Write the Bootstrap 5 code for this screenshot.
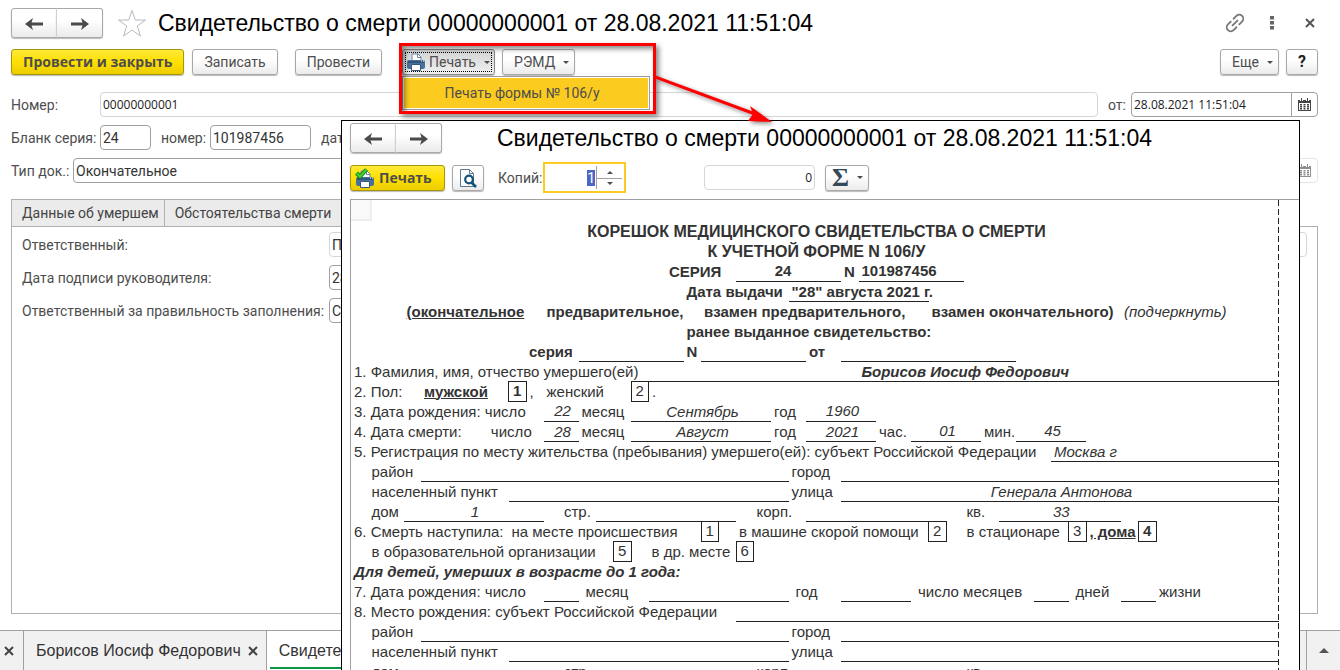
<!DOCTYPE html>
<html lang="ru">
<head>
<meta charset="utf-8">
<meta name="viewport" content="width=device-width, initial-scale=1">
<title>Свидетельство о смерти</title>
<link href="https://cdn.jsdelivr.net/npm/bootstrap@5.3.0/dist/css/bootstrap.min.css" rel="stylesheet">
<style>
  body { font: 14px/20px Roboto, sans-serif; color: #4d4d4d; background: #fff; }
  .doc-title { font: 23px/30px "Liberation Sans", sans-serif; color: #000; white-space: nowrap; margin: 0; }
  .btn { --bs-btn-font-size: 14px; --bs-btn-line-height: 20px; --bs-btn-padding-x: 11px; --bs-btn-padding-y: 0px;
    --bs-btn-border-radius: 3px; --bs-btn-color: #4d4d4d; --bs-btn-border-color: #a8a8a8;
    height: 26px; white-space: nowrap; font-family: Roboto, sans-serif;
    background: linear-gradient(#fff 40%, #ebebeb); box-shadow: 0 1px 1px #bbb; }
  .btn-main { font: bold 14px/20px "Open Sans", sans-serif; background: linear-gradient(#ffe93a, #ffe000 50%, #ebcd00); --bs-btn-border-color: #a8960a; }
  .btn-nav { width: 46px; height: 30px; }
  .btn-nav + .btn-nav { width: 47px; border-left-color: #d0d0d0; }
  .btn-bare { border: 0; background: none; padding: 0; color: #555; line-height: 0; }
  .btn-pressed { width: 93px; background: linear-gradient(#d4d4d4, #f0f0f0); outline: 1px dotted #000; outline-offset: -4px; border-color: #888; }
  .caret { width: 0; height: 0; border: 3px solid transparent; border-top-color: #4d4d4d; border-bottom: 0; }
  .caret-up { border: 3px solid transparent; border-bottom-color: #4d4d4d; border-top: 0; }
  .form-control { height: 25px; min-height: 0; padding: 0 2px; border: 1px solid #a0a0a0; border-radius: 4px; font: 14px/20px Roboto, sans-serif; color: #333; }
  .form-control.digits { font: 12px/20px "Open Sans", sans-serif; color: #222; }
  .form-control.pale { border-color: #d6d6d6; }
  .input-group .btn { height: 25px; width: 27px; padding: 0; line-height: 0; background: #fff; box-shadow: none; border-color: #a0a0a0; border-radius: 4px; }
  .input-group.pale .btn { border-color: #d6d6d6; opacity: .6; }
  label { white-space: nowrap; }
  .w-ser { width: 51px; } .w-num { width: 101px; } .w-date { width: 187px; } .w-sum { width: 111px; }

  /* main form */
  .page { height: 100vh; overflow: hidden; }
  .form-area { padding: 8px 22px 16px 11px; min-height: 0; }
  .title-row { height: 30px; }
  .star-btn { margin: 0 11px 0 14px; }
  .window-tools { gap: 25px; margin-right: 3px; }
  .close-btn { margin-left: 6px; }
  .command-row { margin-top: 11px; margin-bottom: 17px; }
  .save-btn { margin-left: 8px; } .post-btn { margin: 0 20px 0 17px; }
  .remd-btn { margin-left: 7px; }
  .help-btn { margin-left: 7px; width: 32px; padding: 0; color: #222; font-size: 16px; }
  .more-btn .caret, .remd-btn .caret { margin-right: -6px; }
  .field-row { margin-bottom: 8px; }
  .lab-num { width: 89px; flex: none; }
  .num-in { margin-right: 10px; } .from-lab { width: 23px; flex: none; }
  .series-in { margin-right: 10px; } .blank-lab { width: 49px; } .date-lab { width: 50px; margin-left: 10px; }
  .type-lab { width: 62px; flex: none; } .type-in { margin-right: 100px; }
  .nav-tabs { border: 0; flex-wrap: nowrap; margin-top: 8px; }
  .nav-tabs .nav-link { border: 1px solid #b0b0b0; border-bottom: 0; border-radius: 0; background: #ebebeb; color: #444; padding: 3px 5px 3px 10px; height: 27px; white-space: nowrap; margin: 0; }
  .nav-tabs .nav-item + .nav-item .nav-link { border-left: 0; padding-right: 10px; }
  .tab-panel { border: 1px solid #b0b0b0; min-height: 0; padding: 5px 10px 0; }
  .lab-sign { width: 307px; flex: none; }

  .task-bar { height: 40px; border-top: 1px solid #a0a0a0; background: #f1f1f1; font: 16px/20px "Liberation Sans", sans-serif; color: #333; }
  .task-item { border-right: 1px solid #a0a0a0; white-space: nowrap; }
  .task-item.current { background: #fff; flex: 1; }
  .task-item.current span { border-bottom: 2px solid #0d9446; margin: 0 2px 1px 3px; padding: 0 9px; line-height: 33px; }
  .first-task { padding: 0 9px 0 4px; } .named-task { padding: 0 8px 0 12px; gap: 7px; }
  .task-gap { width: 6px; }
  .task-end { width: 34px; border-left: 1px solid #a0a0a0; }
  .tri-up { border: 5px solid transparent; border-bottom: 5px solid #555; border-top: 0; }

  /* print menu with its callout */
  .print-group .dropdown-menu { display: block; top: 27px; left: 0; width: 248px; min-width: 0; padding: 1px; border: 1px solid #9a9a9a; border-radius: 0; z-index: 5; }
  .print-group .dropdown-item { background: #fbcb20; color: #4d4d4d; padding: 0 8px 0 0; line-height: 30px; font-size: 14px; text-align: center; }
  .callout-box { position: absolute; left: -3px; top: -6px; width: 257px; height: 71px; border: 3px solid #f00; z-index: 20; pointer-events: none; box-shadow: 3px 3px 5px rgba(0,0,0,.45), inset 3px 3px 5px rgba(0,0,0,.45); }
  .callout-arrow { position: absolute; left: 253px; top: 23px; z-index: 20; pointer-events: none; filter: drop-shadow(2px 2px 2px rgba(0,0,0,.45)); }

  /* print preview window */
  .preview { position: absolute; left: 341px; right: 40px; top: 120px; bottom: 0; background: #fff; border: 1px solid #000; border-bottom: 0; z-index: 10; overflow: hidden; }
  .preview-head { padding: 2px 0 0 8px; } .preview-head .doc-title { margin-left: 55px; }
  .preview-tools { padding: 9px 0 6px 8px; }
  .preview-tools label { width: 45px; }
  .preview-tools .w-sum { margin: 0 10px 0 78px; }
  .print-btn { width: 95px; } .zoom-btn { width: 32px; margin: 0 14px 0 7px; line-height: 0; }
  .copies { border: 2px solid #fbcb20; width: 83px; height: 31px; }
  .copies .form-control { border: 0; border-radius: 0; border-right: 1px solid #a0a0a0; text-align: right; width: 52px; padding: 0 1px; height: 23px; box-shadow: none; }
  .copies .form-control::selection { background: #4d66c4; color: #fff; }
  .copies .btn-bare { height: 11px; width: 25px; }
  .copies .btn-bare + .btn-bare { border-top: 1px solid #a0a0a0; }
  .sum-btn { width: 44px; padding: 0 5px 0 6px; }
  .sigma { font: bold 26px/20px "Liberation Serif", serif; color: #34495a; }

  .sheet { border: 1px solid #a0a0a0; border-right: 0; border-bottom: 0; padding-right: 20px; margin-left: 8px; }
  .sheet-area { background: repeating-linear-gradient(#222 0 6px, transparent 6px 9px) right top / 1px 100% no-repeat; }
  .blank-form { width: 100%; table-layout: fixed; border-collapse: collapse; font: 15px/18px "Liberation Sans", sans-serif; color: #333; }
  .blank-form td { height: 20px; padding: 1px 0 0 3px; white-space: nowrap; vertical-align: middle; }
  .blank-form tr:first-child td { height: 21px; padding: 0; line-height: 0; }
  .blank-form .ln { border-bottom: 1px solid #222; text-align: center; }
  .blank-form .bx { border: 1px solid #222; padding: 0; text-align: center; }
  .blank-form .fl { padding-left: 7px; }
  .blank-form .ser-no { padding-right: 14px; }
  .big-head { font-size: 16px; }
  .corner { display: block; width: 21px; height: 21px; background: #f9f9f9; border: 1px solid #eee; border-width: 0 2px 2px 0; }
</style>
<script src="https://cdn.jsdelivr.net/npm/bootstrap@5.3.0/dist/js/bootstrap.bundle.min.js"></script>
</head>
<body>
<svg width="0" height="0" class="d-block position-absolute" aria-hidden="true">
  <defs>
    <symbol id="arr" viewBox="0 0 18 12"><path d="M0 6 8 0 6.500 4.500H18v3H6.500L8 12z" fill="#4a4a4a"/></symbol>
    <symbol id="cal" viewBox="0 0 13 13"><path d="M0 2h13v11H0z" fill="#444"/><path d="M3.500 0v3M9.500 0v3" stroke="#fff" stroke-width="3"/><path d="M3.500 0v3M9.500 0v3" stroke="#444" stroke-width="1"/><path d="M1 5h11v7H1z" fill="#fff"/><path d="M2 6h2v1.500H2zM5.500 6h2v1.500h-2zM9 6h2v1.500H9zM2 8h2v1.500H2zM5.500 8h2v1.500h-2zM9 8h2v1.500H9zM2 10h2v1.500H2zM5.500 10h2v1.500h-2zM9 10h2v1.500H9z" fill="#444"/></symbol>
    <symbol id="prn" viewBox="0 0 18 18"><path d="M5 7V1h6l3 3v3" fill="#fff" stroke="#6f8aa5"/><path d="M10.500 1v3.500H14" fill="none" stroke="#6f8aa5"/><rect y="7" width="18" height="9" rx="2" fill="#48719c"/><path d="M1 9h16" stroke="#2b4d72" stroke-width="1.500"/><path d="M14 8h1M16 8h1" stroke="#fff"/><path d="M4.500 11.500h9v6h-9z" fill="#fff" stroke="#35597e"/></symbol>
  </defs>
</svg>

<div class="page d-flex flex-column">
  <main class="d-flex flex-column flex-grow-1 form-area">
    <header class="d-flex align-items-center title-row">
      <div class="btn-group">
        <button class="btn btn-nav" aria-label="Назад"><svg width="18" height="12"><use href="#arr"/></svg></button>
        <button class="btn btn-nav" aria-label="Вперед"><svg width="18" height="12"><g transform="rotate(180 9 6)"><use href="#arr"/></g></svg></button>
      </div>
      <button class="btn-bare star-btn" aria-label="Избранное"><svg width="30" height="29" viewBox="0 0 30 29"><path d="M15 1.500 18.300 11H28.500L20.300 17 23.400 27 15 21 6.600 27 9.700 17 1.500 11H11.700z" fill="#fff" stroke="#b4bac0"/></svg></button>
      <h1 class="doc-title">Свидетельство о смерти 00000000001 от 28.08.2021 11:51:04</h1>
      <div class="ms-auto d-flex align-items-center window-tools">
        <button class="btn-bare" aria-label="Ссылка"><svg width="20" height="20" viewBox="0 0 20 20" fill="none" stroke="#777" stroke-width="1.800" stroke-linecap="round"><g transform="rotate(-45 10 10)"><path d="M8 6H4a4 4 0 0 0 0 8h4M12 6h4a4 4 0 0 1 0 8h-4M6.500 10h7"/></g></svg></button>
        <button class="btn-bare" aria-label="Меню"><svg width="4" height="14" fill="#666"><path d="M0 0h4v3.500H0zM0 5h4v3.500H0zM0 10h4v3.500H0z"/></svg></button>
        <button class="btn-bare close-btn" aria-label="Закрыть"><svg width="10" height="10" stroke="#555" stroke-width="2"><path d="M1 1l8 8M9 1 1 9"/></svg></button>
      </div>
    </header>

    <div class="d-flex command-row">
      <button class="btn btn-main">Провести и закрыть</button>
      <button class="btn save-btn">Записать</button>
      <button class="btn post-btn">Провести</button>
      <div class="print-group position-relative d-flex">
        <button class="btn btn-pressed d-flex align-items-center px-1" aria-expanded="true"><svg width="18" height="18"><use href="#prn"/></svg><span class="ms-1">Печать</span><i class="caret ms-2"></i></button>
        <ul class="dropdown-menu"><li><a class="dropdown-item" href="#">Печать формы № 106/у</a></li></ul>
        <div class="callout-box"></div>
        <svg class="callout-arrow" width="125" height="60" viewBox="0 0 125 60"><path d="M0 5 100 42" stroke="#f00" stroke-width="3"/><path d="M95 34 117 50 93 49 98 42z" fill="#f00"/></svg>
      </div>
      <button class="btn d-flex align-items-center remd-btn">РЭМД<i class="caret ms-2"></i></button>
      <button class="btn d-flex align-items-center ms-auto more-btn">Еще<i class="caret ms-2"></i></button>
      <button class="btn help-btn"><b>?</b></button>
    </div>

    <div class="d-flex align-items-center field-row">
      <label class="lab-num" for="num">Номер:</label>
      <input id="num" class="form-control digits pale flex-fill num-in" value="00000000001">
      <label class="from-lab" for="dt">от:</label>
      <div class="input-group w-date flex-shrink-0">
        <input id="dt" class="form-control digits" value="28.08.2021 11:51:04">
        <button class="btn" aria-label="Календарь"><svg width="13" height="13"><use href="#cal"/></svg></button>
      </div>
    </div>
    <div class="d-flex align-items-center field-row">
      <label class="lab-num" for="ser">Бланк серия:</label>
      <input id="ser" class="form-control w-ser series-in" value="24">
      <label for="bln" class="blank-lab">номер:</label>
      <input id="bln" class="form-control w-num" value="101987456">
      <label for="bdt" class="date-lab">дата:</label>
      <input id="bdt" class="form-control w-num">
    </div>
    <div class="d-flex align-items-center field-row">
      <label for="typ" class="type-lab">Тип док.:</label>
      <input id="typ" class="form-control flex-fill type-in" value="Окончательное">
      <div class="input-group pale w-date flex-shrink-0">
        <input class="form-control pale" aria-label="Дата">
        <button class="btn" aria-label="Календарь"><svg width="13" height="13"><use href="#cal"/></svg></button>
      </div>
    </div>

    <ul class="nav nav-tabs">
      <li class="nav-item"><a class="nav-link" href="#">Данные об умершем</a></li>
      <li class="nav-item"><a class="nav-link" href="#">Обстоятельства смерти</a></li>
    </ul>
    <section class="tab-panel flex-grow-1">
      <div class="d-flex align-items-center field-row"><label class="lab-sign" for="r1">Ответственный:</label><input id="r1" class="form-control pale flex-fill" value="П"></div>
      <div class="d-flex align-items-center field-row"><label class="lab-sign" for="r2">Дата подписи руководителя:</label><input id="r2" class="form-control w-num" value="28"></div>
      <div class="d-flex align-items-center field-row"><label class="lab-sign" for="r3">Ответственный за правильность заполнения:</label><input id="r3" class="form-control w-num" value="С"></div>
    </section>
  </main>

  <footer class="task-bar d-flex flex-shrink-0">
    <div class="task-item d-flex align-items-center first-task"><button class="btn-bare" aria-label="Закрыть"><svg width="10" height="10" stroke="#444" stroke-width="2"><path d="M1 1l8 8M9 1 1 9"/></svg></button></div>
    <div class="task-item d-flex align-items-center named-task">Борисов Иосиф Федорович<button class="btn-bare" aria-label="Закрыть"><svg width="10" height="10" stroke="#444" stroke-width="2"><path d="M1 1l8 8M9 1 1 9"/></svg></button></div>
    <div class="task-item current d-flex flex-column justify-content-end"><span>Свидетельство</span></div>
    <div class="task-gap"></div>
    <button class="btn-bare task-end d-flex align-items-center justify-content-center" aria-label="Показать все"><i class="tri-up"></i></button>
  </footer>
</div>

<section class="preview">
  <div class="d-flex align-items-center preview-head">
    <div class="btn-group">
      <button class="btn btn-nav" aria-label="Назад"><svg width="18" height="12"><use href="#arr"/></svg></button>
      <button class="btn btn-nav" aria-label="Вперед"><svg width="18" height="12"><g transform="rotate(180 9 6)"><use href="#arr"/></g></svg></button>
    </div>
    <h2 class="doc-title">Свидетельство о смерти 00000000001 от 28.08.2021 11:51:04</h2>
  </div>
  <div class="d-flex align-items-center preview-tools">
    <button class="btn btn-main d-flex align-items-center px-1 print-btn"><svg width="20" height="20" viewBox="0 0 20 20"><g transform="translate(1 2)"><use href="#prn" width="18" height="18"/></g><path d="M1.500 5 5 8.500 11.500 1.500" fill="none" stroke="#14751a" stroke-width="4"/><path d="M1.500 5 5 8.500 11.500 1.500" fill="none" stroke="#3fd42c" stroke-width="2.400"/></svg><span class="ms-1">Печать</span></button>
    <button class="btn p-0 zoom-btn" aria-label="Просмотр"><svg width="18" height="20" viewBox="0 0 18 20"><path d="M1.500 1.500h9l4 4v13h-13z" fill="#fff" stroke="#5f7a90"/><path d="M10.500 1.500v4h4" fill="none" stroke="#5f7a90"/><circle cx="10" cy="11.500" r="3.800" fill="#fff" stroke="#14507a" stroke-width="2.200"/><path d="M12.500 14.500 17 19" stroke="#14507a" stroke-width="2.600"/></svg></button>
    <label for="cop">Копий:</label>
    <div class="copies d-flex align-items-center">
      <input id="cop" class="form-control" value="1">
      <div class="d-flex flex-column">
        <button class="btn-bare d-flex align-items-center justify-content-center" aria-label="Больше"><i class="caret-up"></i></button>
        <button class="btn-bare d-flex align-items-center justify-content-center" aria-label="Меньше"><i class="caret"></i></button>
      </div>
    </div>
    <input class="form-control digits pale text-end w-sum" value="0" aria-label="Сумма">
    <button class="btn d-flex align-items-center justify-content-between sum-btn" aria-label="Сумма выделенных"><span class="sigma">Σ</span><i class="caret"></i></button>
  </div>

  <div class="sheet"><div class="sheet-area">
    <table class="blank-form">
      <colgroup><col span="53"></colgroup>
      <tr><td colspan="53"><span class="corner"></span></td></tr>
      <tr><td colspan="53" class="text-center fw-bold big-head">КОРЕШОК МЕДИЦИНСКОГО СВИДЕТЕЛЬСТВА О СМЕРТИ</td></tr>
      <tr><td colspan="53" class="text-center fw-bold big-head">К УЧЕТНОЙ ФОРМЕ N 106/У</td></tr>
      <tr class="fw-bold"><td colspan="18"></td><td colspan="4">СЕРИЯ</td><td colspan="6" class="ln ser-no">24</td><td>N</td><td colspan="6" class="ln text-start">101987456</td><td colspan="18"></td></tr>
      <tr class="fw-bold"><td colspan="19"></td><td colspan="6">Дата выдачи</td><td colspan="8" class="ln text-start">"28" августа 2021 г.</td><td colspan="20"></td></tr>
      <tr class="fw-bold"><td colspan="3"></td><td colspan="8"><u>(окончательное</u></td><td colspan="9">предварительное,</td><td colspan="13">взамен предварительного,</td><td colspan="11">взамен окончательного)</td><td colspan="9" class="fw-normal fst-italic">(подчеркнуть)</td></tr>
      <tr class="fw-bold"><td colspan="19"></td><td colspan="34">ранее выданное свидетельство:</td></tr>
      <tr class="fw-bold"><td colspan="10"></td><td colspan="3">серия</td><td colspan="6" class="ln"></td><td>N</td><td colspan="6" class="ln"></td><td colspan="2">от</td><td colspan="10" class="ln"></td><td colspan="15"></td></tr>
      <tr><td colspan="17">1. Фамилия, имя, отчество умершего(ей)</td><td colspan="36" class="ln fw-bold fst-italic">Борисов Иосиф Федорович</td></tr>
      <tr><td colspan="4">2. Пол:</td><td colspan="5" class="fw-bold"><u>мужской</u></td><td class="bx fw-bold">1</td><td>,</td><td colspan="5">женский</td><td class="bx">2</td><td colspan="36">.</td></tr>
      <tr><td colspan="11">3. Дата рождения: число</td><td colspan="2" class="ln fst-italic">22</td><td colspan="3">месяц</td><td colspan="8" class="ln fst-italic">Сентябрь</td><td colspan="2">год</td><td colspan="4" class="ln fst-italic">1960</td><td colspan="23"></td></tr>
      <tr><td colspan="11">4. Дата смерти: &nbsp; &nbsp; &nbsp; число</td><td colspan="2" class="ln fst-italic">28</td><td colspan="3">месяц</td><td colspan="8" class="ln fst-italic">Август</td><td colspan="2">год</td><td colspan="4" class="ln fst-italic">2021</td><td colspan="2">час.</td><td colspan="4" class="ln fst-italic">01</td><td colspan="2">мин.</td><td colspan="4" class="ln fst-italic">45</td><td colspan="11"></td></tr>
      <tr><td colspan="40">5. Регистрация по месту жительства (пребывания) умершего(ей): субъект Российской Федерации</td><td colspan="13" class="ln text-start fst-italic">Москва г</td></tr>
      <tr><td></td><td colspan="3">район</td><td colspan="21" class="ln"></td><td colspan="3">город</td><td colspan="25" class="ln"></td></tr>
      <tr><td></td><td colspan="8">населенный пункт</td><td colspan="16" class="ln"></td><td colspan="3">улица</td><td colspan="25" class="ln fst-italic">Генерала Антонова</td></tr>
      <tr><td></td><td colspan="2">дом</td><td colspan="8" class="ln fst-italic">1</td><td></td><td colspan="2">стр.</td><td colspan="8" class="ln"></td><td></td><td colspan="3">корп.</td><td colspan="8" class="ln"></td><td></td><td colspan="2">кв.</td><td colspan="7" class="ln fst-italic">33</td><td colspan="9"></td></tr>
      <tr><td colspan="9">6. Смерть наступила:</td><td colspan="11">на месте происшествия</td><td class="bx">1</td><td></td><td colspan="11">в машине скорой помощи</td><td class="bx">2</td><td></td><td colspan="6">в стационаре</td><td class="bx">3</td><td colspan="3" class="fw-bold"><u>, дома</u></td><td class="bx fw-bold">4</td><td colspan="7"></td></tr>
      <tr><td></td><td colspan="14">в образовательной организации</td><td class="bx">5</td><td></td><td colspan="5">в др. месте</td><td class="bx">6</td><td colspan="30"></td></tr>
      <tr><td colspan="53" class="fw-bold fst-italic">Для детей, умерших в возрасте до 1 года:</td></tr>
      <tr><td colspan="11">7. Дата рождения: число</td><td colspan="2" class="ln"></td><td colspan="4" class="fl">месяц</td><td colspan="8" class="ln"></td><td colspan="3" class="fl">год</td><td colspan="4" class="ln"></td><td colspan="7" class="fl">число месяцев</td><td colspan="2" class="ln"></td><td colspan="3" class="fl">дней</td><td colspan="2" class="ln"></td><td colspan="7">жизни</td></tr>
      <tr><td colspan="22">8. Место рождения: субъект Российской Федерации</td><td colspan="31" class="ln"></td></tr>
      <tr><td></td><td colspan="3">район</td><td colspan="21" class="ln"></td><td colspan="3">город</td><td colspan="25" class="ln"></td></tr>
      <tr><td></td><td colspan="8">населенный пункт</td><td colspan="16" class="ln"></td><td colspan="3">улица</td><td colspan="25" class="ln"></td></tr>
      <tr><td></td><td colspan="2">дом</td><td colspan="8" class="ln"></td><td></td><td colspan="2">стр.</td><td colspan="8" class="ln"></td><td></td><td colspan="3">корп.</td><td colspan="8" class="ln"></td><td></td><td colspan="2">кв.</td><td colspan="7" class="ln"></td><td colspan="9"></td></tr>
    </table>
  </div></div>
</section>

<script>
  const copies = document.getElementById('cop');
  copies.focus();
  copies.select();
</script>
</body>
</html>
